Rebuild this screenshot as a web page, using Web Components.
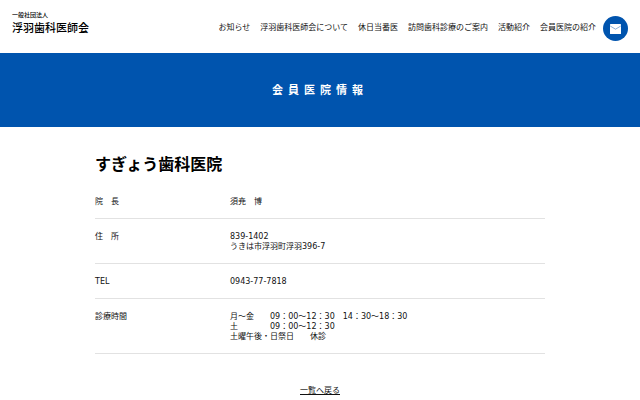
<!DOCTYPE html>
<html lang="ja">
<head>
	<meta charset="UTF-8">
	<meta name="viewport" content="width=device-width, initial-scale=1">
	<title>すぎょう歯科医院 | 浮羽歯科医師会</title>
	<style>
		body {
			--blue: #0054ae;
			--line: #e2e2e2;
			margin: 0;
			background: white;
			color: #111;
			font: 8px/10px "DejaVu Sans", "Noto Sans CJK JP", sans-serif;
		}
	</style>
</head>
<body>
	<site-header>
		<site-logo slot="logo" org="一般社団法人">浮羽歯科医師会</site-logo>
		<nav-link href="#news">お知らせ</nav-link>
		<nav-link href="#about">浮羽歯科医師会について</nav-link>
		<nav-link href="#holiday">休日当番医</nav-link>
		<nav-link href="#visit">訪問歯科診療のご案内</nav-link>
		<nav-link href="#activity">活動紹介</nav-link>
		<nav-link href="#members">会員医院の紹介</nav-link>
		<mail-button slot="contact"></mail-button>
	</site-header>
	<page-hero>会員医院情報</page-hero>
	<clinic-profile>
		<span slot="name">すぎょう歯科医院</span>
		<info-row label="院　長">須尭　博</info-row>
		<info-row label="住　所">839-1402<br>うきは市浮羽町浮羽396-7</info-row>
		<info-row label="TEL">0943-77-7818</info-row>
		<info-row label="診療時間">月～金　　09：00～12：30　14：30～18：30<br>土　　　　09：00～12：30<br>土曜午後・日祭日　　休診</info-row>
		<back-link slot="back" href="#list">一覧へ戻る</back-link>
	</clinic-profile>

	<script>
		class SiteHeader extends HTMLElement {
			constructor() {
				super();

				this.attachShadow({ mode: 'open' });
				this.shadowRoot.innerHTML = `
					<style>
						:host {
							display: block;
						}

						header {
							display: flex;
							align-items: center;
							justify-content: space-between;
							padding: 10px 12px 6px;
						}

						#menu {
							display: flex;
							align-items: center;
							gap: 7px;
							padding: 6px 0;
						}

						nav {
							display: flex;
							gap: 10px;
							padding-bottom: 1px;
						}
					</style>
					<header>
						<slot name="logo"></slot>
						<div id="menu">
							<nav><slot></slot></nav>
							<slot name="contact"></slot>
						</div>
					</header>
				`;
			}
		}

		class SiteLogo extends HTMLElement {
			constructor() {
				super();

				this.attachShadow({ mode: 'open' });
				this.shadowRoot.innerHTML = `
					<style>
						:host {
							display: block;
							align-self: flex-start;
						}

						a {
							display: block;
							color: #000;
							font-family: "Noto Sans CJK JP", sans-serif;
							font-weight: 500;
							font-size: 11px;
							line-height: 14px;
							text-decoration: none;
						}

						small {
							display: block;
							font-size: 6px;
							line-height: 10px;
						}
					</style>
					<a href="#top"><small></small><slot></slot></a>
				`;
			}

			connectedCallback() {
				this.shadowRoot.querySelector('small').textContent = this.getAttribute('org');
			}
		}

		class NavLink extends HTMLElement {
			constructor() {
				super();

				this.attachShadow({ mode: 'open' });
				this.shadowRoot.innerHTML = `
					<style>
						:host {
							display: block;
						}

						a {
							color: inherit;
							text-decoration: none;
							white-space: nowrap;
						}
					</style>
					<a><slot></slot></a>
				`;
			}

			connectedCallback() {
				this.shadowRoot.querySelector('a').href = this.getAttribute('href');
			}
		}

		class MailButton extends HTMLElement {
			constructor() {
				super();

				this.attachShadow({ mode: 'open' });
				this.shadowRoot.innerHTML = `
					<style>
						:host {
							display: block;
						}

						a {
							display: flex;
							align-items: center;
							justify-content: center;
							width: 25px;
							height: 25px;
							border-radius: 50%;
							background: var(--blue);
						}
					</style>
					<a href="#contact" aria-label="お問い合わせ">
						<svg width="11" height="10" viewBox="0 0 11 10" aria-hidden="true">
							<rect width="11" height="10" rx="0.6" fill="#fff"/>
							<path d="M0.2 2 L5.5 5.2 L10.8 2" fill="none" stroke="#0054ae" stroke-opacity="0.5" stroke-width="0.9"/>
						</svg>
					</a>
				`;
			}
		}

		class PageHero extends HTMLElement {
			constructor() {
				super();

				this.attachShadow({ mode: 'open' });
				this.shadowRoot.innerHTML = `
					<style>
						:host {
							display: block;
							padding: 28px 12px 30px;
							background: var(--blue);
							color: white;
							text-align: center;
						}

						h1 {
							margin: 0;
							font-family: "Noto Sans CJK JP", sans-serif;
							font-size: 11px;
							line-height: 16px;
							letter-spacing: 5px;
						}
					</style>
					<h1><slot></slot></h1>
				`;
			}
		}

		class ClinicProfile extends HTMLElement {
			constructor() {
				super();

				this.attachShadow({ mode: 'open' });
				this.shadowRoot.innerHTML = `
					<style>
						:host {
							display: block;
							max-width: 450px;
							margin: 0 auto;
							padding: 23px 12px 0;
						}

						h2 {
							margin: 0 0 8px;
							color: #000;
							font-family: "Noto Sans CJK JP", sans-serif;
							font-size: 16px;
							line-height: 26px;
						}

						footer {
							padding-top: 32px;
							text-align: center;
						}
					</style>
					<main>
						<h2><slot name="name"></slot></h2>
						<slot></slot>
						<footer><slot name="back"></slot></footer>
					</main>
				`;
			}
		}

		class InfoRow extends HTMLElement {
			constructor() {
				super();

				this.attachShadow({ mode: 'open' });
				this.shadowRoot.innerHTML = `
					<style>
						:host {
							display: block;
							border-bottom: 1px solid var(--line);
						}

						dl {
							display: grid;
							grid-template-columns: 30% 1fr;
							margin: 0;
							padding: 13px 0 11px;
						}

						dd {
							margin: 0;
						}
					</style>
					<dl>
						<dt></dt>
						<dd><slot></slot></dd>
					</dl>
				`;
			}

			connectedCallback() {
				this.shadowRoot.querySelector('dt').textContent = this.getAttribute('label');
			}
		}

		class BackLink extends HTMLElement {
			constructor() {
				super();

				this.attachShadow({ mode: 'open' });
				this.shadowRoot.innerHTML = `
					<style>
						:host {
							display: inline-block;
						}

						a {
							color: inherit;
						}
					</style>
					<a><slot></slot></a>
				`;
			}

			connectedCallback() {
				this.shadowRoot.querySelector('a').href = this.getAttribute('href');
			}
		}

		customElements.define('site-header', SiteHeader);
		customElements.define('site-logo', SiteLogo);
		customElements.define('nav-link', NavLink);
		customElements.define('mail-button', MailButton);
		customElements.define('page-hero', PageHero);
		customElements.define('clinic-profile', ClinicProfile);
		customElements.define('info-row', InfoRow);
		customElements.define('back-link', BackLink);
	</script>
</body>
</html>
